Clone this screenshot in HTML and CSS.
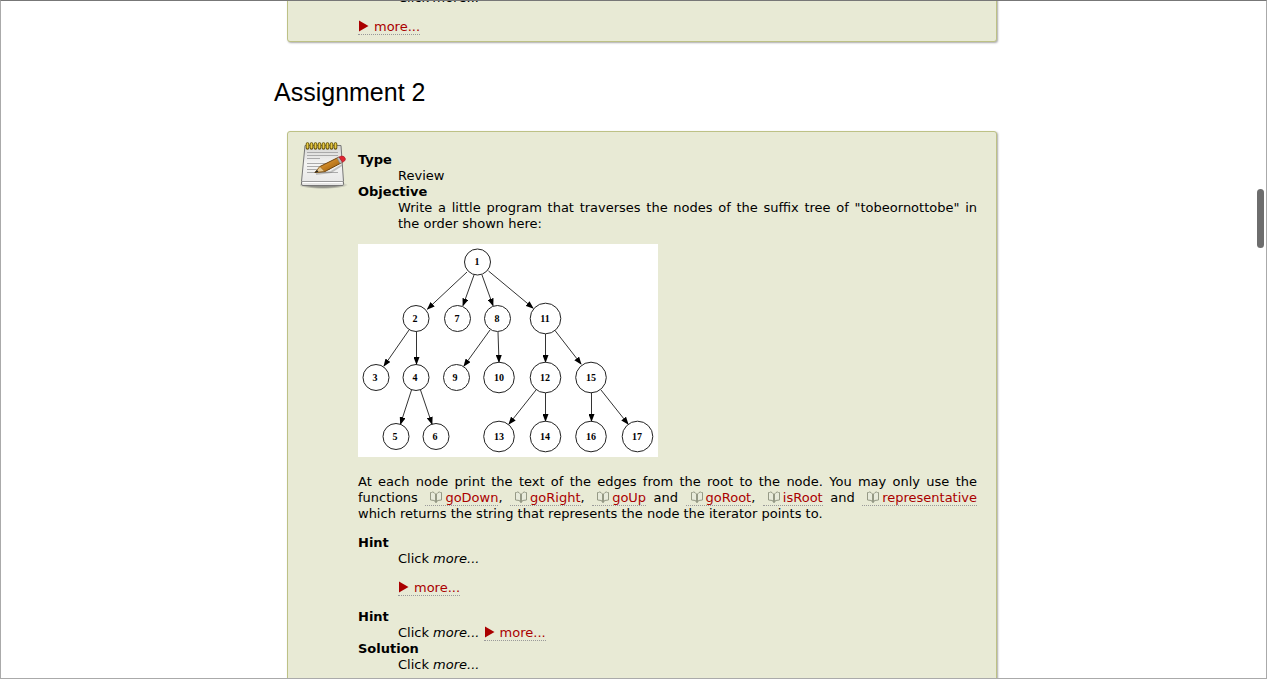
FILE: index.html
```
<!DOCTYPE html>
<html lang="en">
<head>
<meta charset="utf-8">
<title>Assignments</title>
<link rel="stylesheet" href="styles.css">
</head>
<body>
<svg class="defs" aria-hidden="true">
  <symbol id="tri" viewBox="0 0 16 12"><path d="M1 0.500V11.500L10.500 6z" fill="#aa0000"/></symbol>
  <symbol id="book" viewBox="0 0 16 12"><path d="M6.500 11.500L5.500 9.500L1.500 9V1.500H2.500Q3.500 0.500 5 1.500L6.500 3zM7.500 11.500L8.500 9.500L12.500 9V1.500H11.500Q10.500 0.500 9 1.500L7.500 3z" fill="#e8ebdb" stroke="#959985" stroke-linejoin="round"/></symbol>
</svg>
<div class="frame">
<main class="page">
  <section class="box previous">
    <dl>
      <dd>Click <em>more...</em></dd>
    </dl>
    <p><a class="more" href="#more1"><svg class="mark"><use href="#tri"/></svg>more...</a></p>
  </section>

  <h2 class="title">Assignment 2</h2>

  <section class="box assignment">
    <svg class="notepad" viewBox="0 0 48 48" aria-hidden="true">
      <defs>
        <linearGradient id="paper" x2="0" y2="1"><stop stop-color="#d4d4d2"/><stop offset=".45" stop-color="#f4f4f3"/><stop offset="1" stop-color="#e6e6e5"/></linearGradient>
        <linearGradient id="wood" x2="1" y2="1"><stop stop-color="#efc16b"/><stop offset=".5" stop-color="#c88222"/><stop offset="1" stop-color="#84500b"/></linearGradient>
        <radialGradient id="shade"><stop offset=".6" stop-color="#555" stop-opacity=".6"/><stop offset="1" stop-color="#555" stop-opacity="0"/></radialGradient>
      </defs>
      <ellipse cx="23" cy="43" rx="25" ry="4" fill="url(#shade)"/>
      <path d="M5 3.500H41L43.500 39.500V42.500Q43.500 43.500 42 43.500H3Q1.500 43.500 1.500 42V39.500z" fill="url(#paper)" stroke="#777"/>
      <path d="M2 39.500H43" stroke="#999"/>
      <path d="M3 40.500H42" stroke="#fff"/>
      <path d="M7 10.500H38M7 13.500H38M7 16.500H20M7 21.500H38M7 24.500H33M7 27.500H30M7 30.500H38" stroke="#aaa"/>
      <path d="M7.500 2V6M11.500 2V6M15.500 2V6M19.500 2V6M23.500 2V6M27.500 2V6M31.500 2V6M35.500 2V6" stroke="#65540b" stroke-width="3.600" stroke-linecap="round"/>
      <path d="M7.500 2V5.500M11.500 2V5.500M15.500 2V5.500M19.500 2V5.500M23.500 2V5.500M27.500 2V5.500M31.500 2V5.500M35.500 2V5.500" stroke="#e9cb45" stroke-width="1.800" stroke-linecap="round"/>
      <path d="M16 32L31 30L42 23" stroke="#777" stroke-opacity=".4" stroke-width="2" fill="none"/>
      <path d="M15 30.500L20 24.500L39 15L42 20.500L25 29.500z" fill="url(#wood)" stroke="#71430a"/>
      <path d="M15 30.500L20 24.500L24.500 29.300z" fill="#e7c88e" stroke="#8a6020" stroke-width=".6"/>
      <path d="M14.500 31L17 28L18.500 29.700z" fill="#222"/>
      <path d="M37 16L39.500 15L42.500 20.200L40 21.500z" fill="#bbb" stroke="#777" stroke-width=".5"/>
      <path d="M39 15L41.500 14Q44.500 13.700 45.500 17Q45.500 19 42.500 20.300z" fill="#df2631" stroke="#a51620" stroke-width=".6"/>
    </svg>

    <dl class="task">
      <dt>Type</dt>
      <dd>Review</dd>
      <dt>Objective</dt>
      <dd>Write a little program that traverses the nodes of the suffix tree of "tobeornottobe" in the order shown here:</dd>
    </dl>

    <svg class="tree" viewBox="0 0 300 213" role="img" aria-label="Suffix tree with numbered nodes">
      <defs>
        <marker id="arrow" markerWidth="8" markerHeight="6" refX="7" refY="3" orient="auto" markerUnits="userSpaceOnUse"><path d="M0 0L8 3L0 6z"/></marker>
      </defs>
      <g class="edges">
        <path d="M109 28L69.500 65"/><path d="M116 31L105 61.500"/><path d="M124 31L135 61.500"/><path d="M130.500 27L175 64"/>
        <path d="M51 86L26 122"/><path d="M58.500 88V120"/>
        <path d="M132 86L106 122"/><path d="M140 88L141 118"/>
        <path d="M187.500 90V118"/><path d="M197 86.500L223 120"/>
        <path d="M53.500 146L42.500 180"/><path d="M62.500 146L74 180"/>
        <path d="M178 146L151 180"/><path d="M187.500 149V177"/>
        <path d="M233.500 149V177"/><path d="M243 146L270 180"/>
      </g>
      <g class="nodes">
        <circle cx="119.500" cy="18" r="13"/><circle cx="58" cy="74.500" r="13"/><circle cx="99.500" cy="74.500" r="13"/><circle cx="139.500" cy="74.500" r="13"/><circle cx="187.500" cy="74.500" r="15.300"/>
        <circle cx="18" cy="133.500" r="13"/><circle cx="58" cy="133.500" r="13"/><circle cx="98.500" cy="133.500" r="13"/><circle cx="141" cy="133.500" r="15.300"/><circle cx="187.500" cy="133.500" r="15.300"/><circle cx="233" cy="133.500" r="15.300"/>
        <circle cx="38" cy="192.500" r="13"/><circle cx="78" cy="192.500" r="13"/><circle cx="141" cy="192.500" r="15.300"/><circle cx="187.500" cy="192.500" r="15.300"/><circle cx="233" cy="192.500" r="15.300"/><circle cx="279.500" cy="192.500" r="15.300"/>
      </g>
      <g class="labels">
        <text x="119" y="21">1</text>
        <text x="57" y="78">2</text><text x="99" y="78">7</text><text x="139" y="78">8</text><text x="187" y="78">11</text>
        <text x="17" y="137">3</text><text x="57" y="137">4</text><text x="97" y="137">9</text><text x="141" y="137">10</text><text x="187" y="137">12</text><text x="233" y="137">15</text>
        <text x="37" y="196">5</text><text x="77" y="196">6</text><text x="141" y="196">13</text><text x="187" y="196">14</text><text x="233" y="196">16</text><text x="279" y="196">17</text>
      </g>
    </svg>

    <p>At each node print the text of the edges from the root to the node. You may only use the functions <a class="ref" href="#goDown"><svg class="mark"><use href="#book"/></svg>goDown</a>, <a class="ref" href="#goRight"><svg class="mark"><use href="#book"/></svg>goRight</a>, <a class="ref" href="#goUp"><svg class="mark"><use href="#book"/></svg>goUp</a> and <a class="ref" href="#goRoot"><svg class="mark"><use href="#book"/></svg>goRoot</a>, <a class="ref" href="#isRoot"><svg class="mark"><use href="#book"/></svg>isRoot</a> and <a class="ref" href="#representative"><svg class="mark"><use href="#book"/></svg>representative</a> which returns the string that represents the node the iterator points to.</p>

    <dl>
      <dt>Hint</dt>
      <dd>Click <em>more...</em>
        <p><a class="more" href="#more2"><svg class="mark"><use href="#tri"/></svg>more...</a></p>
      </dd>
      <dt>Hint</dt>
      <dd>Click <em>more...</em> <a class="more" href="#more3"><svg class="mark"><use href="#tri"/></svg>more...</a></dd>
      <dt>Solution</dt>
      <dd>Click <em>more...</em></dd>
    </dl>
  </section>
</main>
<div class="thumb"></div>
</div>
</body>
</html>
```
FILE: styles.css
```
body {
  margin: 0;
  background: #fff;
  color: #000;
  font: 13px/16px Verdana, "DejaVu Sans", sans-serif;
}

.defs {
  position: absolute;
  width: 0;
  height: 0;
}

.frame {
  position: relative;
  box-sizing: border-box;
  height: 100vh;
  overflow: hidden;
  border: 1px solid #aaa;
  border-top-color: #777;
}

.page {
  box-sizing: border-box;
  max-width: 751px;
  margin: 0 auto;
  padding: 0 12px 0 16px;
}

.box {
  margin-left: 13px;
  padding: 7px 19px 6px 70px;
  background: #e8ead5;
  border: 1px solid #bdc186;
  border-radius: 3px;
  box-shadow: 1px 1px 2px #aaa;
  text-align: justify;
}

.previous {
  margin-top: -32px;
}

.previous p {
  margin-bottom: 0;
}

.assignment {
  position: relative;
  min-height: 560px;
}

.title {
  margin: 36px 0 25px;
  font: 25px/28px Arial, "Liberation Sans", sans-serif;
}

dl,
p {
  margin: 13px 0;
}

.task {
  margin-bottom: 12px;
}

dt {
  font-weight: bold;
}

dd {
  margin: 0 0 0 40px;
}

a {
  color: #aa0000;
  text-decoration: none;
  border-bottom: 1px dotted #999;
}

.mark {
  width: 16px;
  height: 12px;
  vertical-align: -1px;
}

.ref {
  padding-left: 4px;
}

.notepad {
  position: absolute;
  top: 10px;
  left: 12px;
  width: 48px;
  height: 48px;
}

.tree {
  display: block;
  width: 300px;
  max-width: 100%;
  margin-bottom: 17px;
  background: #fff;
}

.edges path {
  fill: none;
  stroke: #333;
  marker-end: url(#arrow);
}

.nodes {
  fill: none;
  stroke: #222;
}

.labels {
  font: bold 10px "Liberation Serif", serif;
  text-anchor: middle;
}

.thumb {
  position: absolute;
  top: 188px;
  right: 2px;
  width: 7px;
  height: 59px;
  border-radius: 4px;
  background: #6d6d6d;
}
```
